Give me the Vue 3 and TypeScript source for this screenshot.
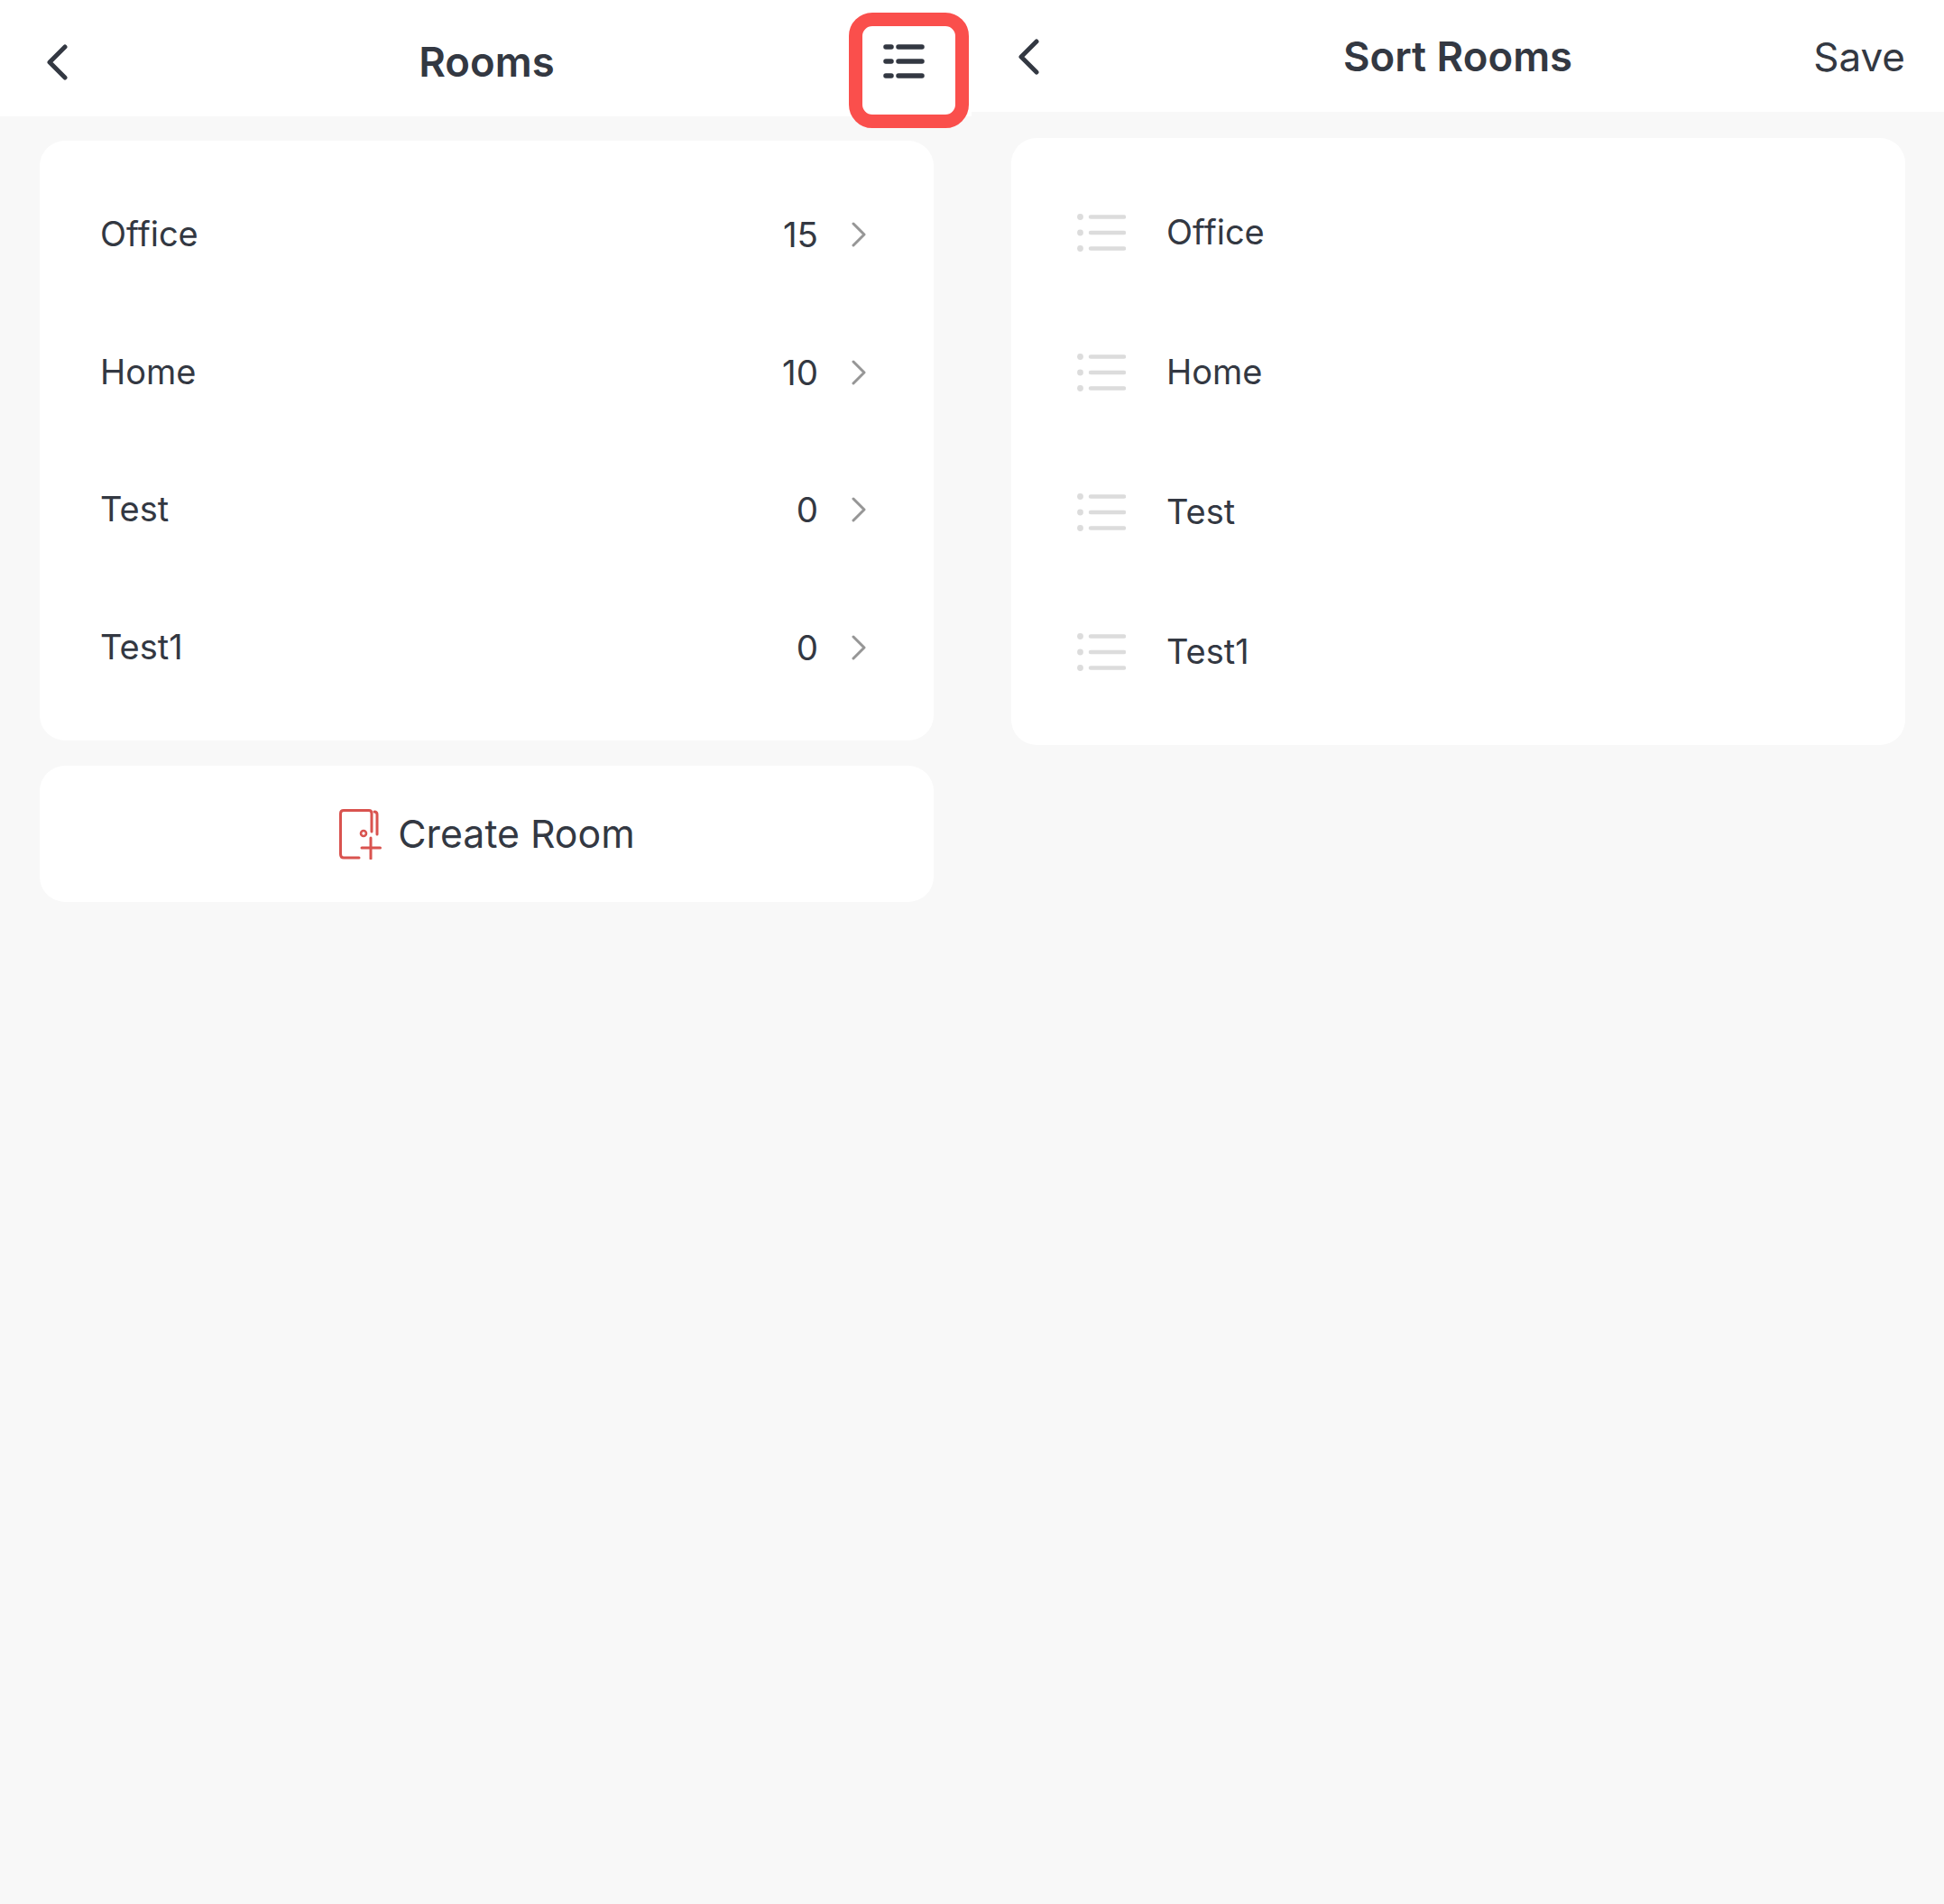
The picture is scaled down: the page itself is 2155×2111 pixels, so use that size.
<script setup lang="ts">
const rooms = [
  { name: 'Office', count: 15 },
  { name: 'Home', count: 10 },
  { name: 'Test', count: 0 },
  { name: 'Test1', count: 0 },
]
</script>

<template>
  <div class="page">
    <section class="panel">
      <header class="bar bar-left">
        <svg class="back back-left" width="24" height="40" viewBox="0 0 24 40">
          <path d="M21 3 L4 20 L21 37" fill="none" stroke="#333842" stroke-width="5" stroke-linecap="round" stroke-linejoin="round" />
        </svg>
        <h1 class="title">Rooms</h1>
        <div class="bar-end">
          <svg class="list-icon" width="46" height="38" viewBox="0 0 46 38">
            <path d="M3 3 H9 M17 3 H43 M3 19 H9 M17 19 H43 M3 35 H9 M17 35 H43" fill="none" stroke="#333842" stroke-width="5.5" stroke-linecap="round" />
          </svg>
          <div class="highlight"></div>
        </div>
      </header>
      <div class="body body-left">
        <div class="card rooms-card">
          <div v-for="room in rooms" :key="room.name" class="row">
            <span class="name">{{ room.name }}</span>
            <span class="count">{{ room.count }}</span>
            <svg class="chev" width="16" height="28" viewBox="0 0 16 28">
              <path d="M2 2 L14 14 L2 26" fill="none" stroke="#969696" stroke-width="3" stroke-linecap="round" stroke-linejoin="round" />
            </svg>
          </div>
        </div>
        <div class="card create-card">
          <svg class="door" width="48" height="56" viewBox="0 0 48 56">
            <path d="M22 54 H5 Q1.5 54 1.5 50 V5 Q1.5 1.5 5 1.5 H33 Q36 1.5 36 5 V25" fill="none" stroke="#d9534f" stroke-width="3" stroke-linecap="round" />
            <path d="M39 3 Q42 3 42 6 V28" fill="none" stroke="#d9534f" stroke-width="3" stroke-linecap="round" />
            <circle cx="27" cy="27" r="3" fill="none" stroke="#d9534f" stroke-width="2.6" />
            <path d="M25 43 H45.5 M35 32 V55" fill="none" stroke="#d9534f" stroke-width="3" stroke-linecap="round" />
          </svg>
          <span class="create-label">Create Room</span>
        </div>
      </div>
    </section>

    <section class="panel">
      <header class="bar bar-right">
        <svg class="back back-right" width="24" height="40" viewBox="0 0 24 40">
          <path d="M21 3 L4 20 L21 37" fill="none" stroke="#333842" stroke-width="5" stroke-linecap="round" stroke-linejoin="round" />
        </svg>
        <h1 class="title">Sort Rooms</h1>
        <span class="save">Save</span>
      </header>
      <div class="body body-right">
        <div class="card sort-card">
          <div v-for="room in rooms" :key="room.name" class="sort-row">
            <svg class="grip" width="54" height="44" viewBox="0 0 54 44">
              <g fill="#dcdcdc">
                <circle cx="3.5" cy="4.5" r="3.4" />
                <circle cx="3.5" cy="22" r="3.4" />
                <circle cx="3.5" cy="39.5" r="3.4" />
              </g>
              <path d="M15 4.5 H52 M15 22 H52 M15 39.5 H52" fill="none" stroke="#dcdcdc" stroke-width="4.5" stroke-linecap="round" />
            </svg>
            <span class="name">{{ room.name }}</span>
          </div>
        </div>
      </div>
    </section>
  </div>
</template>

<style>
html, body { margin: 0; background: #f8f8f8; }
</style>

<style scoped>
.page {
  display: grid;
  grid-template-columns: 1077px 1078px;
  width: 2155px;
  height: 2111px;
  background: #f8f8f8;
  font-family: Inter, "Liberation Sans", sans-serif;
  color: #333842;
}
.bar {
  display: grid;
  grid-template-columns: 1fr auto 1fr;
  align-items: center;
  background: #fff;
  box-sizing: border-box;
}
.bar-left { height: 129px; padding: 9px 18px 0 20px; }
.bar-right { height: 124px; padding: 2px 43px 0 43px; }
.back-left { margin-left: 31px; }
.back-right { margin-left: 8px; }
.title { margin: 0; font-size: 45.5px; font-weight: 600; line-height: 1.2; }
.bar-end { position: relative; justify-self: end; display: flex; align-items: center; }
.list-icon { display: block; margin: -2px 34px 0 0; }
.highlight {
  position: absolute;
  top: -37px;
  right: -15px;
  width: 133px;
  height: 128px;
  box-sizing: border-box;
  border: 15px solid #fa4f4c;
  border-radius: 26px;
}
.save { justify-self: end; font-size: 44px; line-height: 1.2; }
.body { display: flex; flex-direction: column; }
.body-left { padding: 27px 42px 0 44px; gap: 28px; }
.body-right { padding: 29px 43px 0 44px; }
.card { background: #fff; border-radius: 28px; }
.rooms-card { padding: 28px 75px 27px 67px; }
.row { display: flex; align-items: center; height: 152.5px; }
.name { flex: 1; font-size: 38px; line-height: 1.2; }
.count { font-size: 38.5px; line-height: 1.2; margin-right: 37px; }
.chev { display: block; }
.create-card {
  height: 151px;
  display: flex;
  align-items: center;
  justify-content: center;
  gap: 17px;
}
.door { display: block; margin-left: 1px; }
.create-label { font-size: 42.8px; line-height: 1.2; }
.sort-card { padding: 27px 0 26px 73px; }
.sort-row { display: flex; align-items: center; height: 155px; gap: 45px; }
.grip { display: block; }
</style>
